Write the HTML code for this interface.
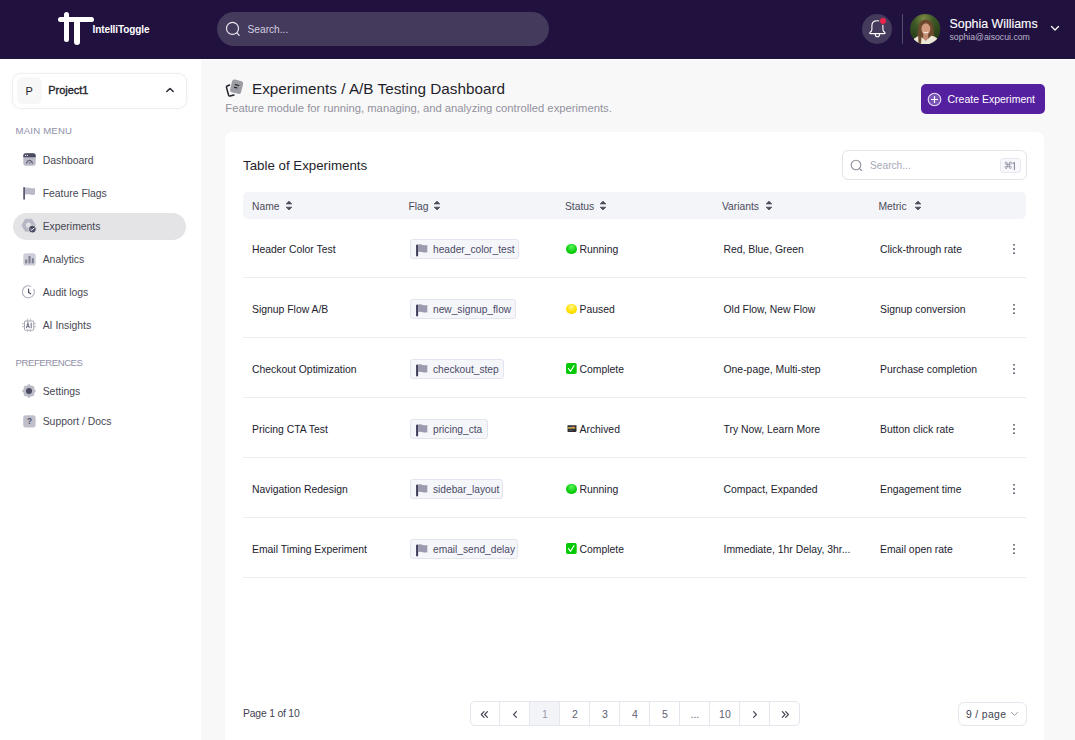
<!DOCTYPE html>
<html><head><meta charset="utf-8">
<style>
*{margin:0;padding:0;box-sizing:border-box}
html,body{width:1075px;height:740px;overflow:hidden;background:#f8f8f8;font-family:"Liberation Sans",sans-serif;color:#1f1f2b}
.abs{position:absolute}
.t{position:absolute;white-space:nowrap;line-height:1}
.nav{font-size:10.4px;color:#474753;left:42.7px}
.sec{font-size:9.6px;color:#9090a8;left:15.5px}
.th{font-size:10.3px;color:#4b4b5a}
.cell{font-size:10.4px;color:#22222e}
.chip{position:absolute;left:410px;height:20px;background:#f5f6fa;border:1px solid #e4e4ee;border-radius:3px}
.chip span{position:absolute;left:22px;top:5.1px;font-size:10.2px;color:#4a4a66;white-space:nowrap;line-height:1}
.pg{position:absolute;top:0;width:30px;height:23px;border-left:1px solid #e5e6ee;font-size:10.5px;color:#626272;text-align:center;line-height:25.3px}
</style></head>
<body>
<div class="abs" style="left:0;top:59px;width:1075px;height:1px;background:#fff"></div>
<div class="abs" style="left:0;top:0;width:1075px;height:59px;background:#21113f"></div>
<div class="abs" style="left:58px;top:17px;width:36px;height:5.4px;background:#fff;border-radius:3px"></div>
<div class="abs" style="left:63.8px;top:11.6px;width:5.4px;height:30px;background:#fff;border-radius:3px"></div>
<div class="abs" style="left:73.8px;top:17px;width:6px;height:28.4px;background:#fff;border-radius:3px"></div>
<div class="t" style="left:92.5px;top:24.5px;font-size:10px;font-weight:bold;color:#fff;letter-spacing:-0.1px">IntelliToggle</div>
<div class="abs" style="left:216.5px;top:12px;width:332px;height:33.5px;background:#433a5c;border-radius:17px"></div>
<svg class="abs" style="left:225px;top:21px" width="18" height="17" viewBox="0 0 18 17"><circle cx="7.5" cy="7.4" r="6" fill="none" stroke="#e8e6ee" stroke-width="1.2"/><path d="M12 12 L14.2 14.4" stroke="#e8e6ee" stroke-width="1.2" stroke-linecap="round"/></svg>
<div class="t" style="left:247.5px;top:24.5px;font-size:10.2px;color:#d4cee0">Search...</div>
<div class="abs" style="left:862px;top:13.6px;width:30.4px;height:30.4px;background:#433a5c;border-radius:50%"></div>
<svg class="abs" style="left:868px;top:19px" width="19" height="19" viewBox="0 0 19 19"><path d="M9.4 1.7 C6 1.7 3.9 3.4 3.9 6.6 L3.9 10.6 Q3.9 12.4 1.9 13.5 Q1.3 14.6 2.5 14.6 L16.3 14.6 Q17.5 14.6 16.9 13.5 Q14.9 12.4 14.9 10.6 L14.9 6.6 C14.9 3.4 12.8 1.7 9.4 1.7 Z" fill="none" stroke="#fff" stroke-width="1.1" stroke-linejoin="round"/><path d="M7.2 14.9 Q7.2 17.8 9.4 17.8 Q11.6 17.8 11.6 14.9" fill="none" stroke="#fff" stroke-width="1.1"/></svg>
<div class="abs" style="left:878.9px;top:16.8px;width:7.8px;height:7.8px;background:#f0244a;border:1px solid #433a5c;border-radius:50%"></div>
<div class="abs" style="left:901.5px;top:14px;width:1px;height:30px;background:#544a6c"></div>
<svg class="abs" style="left:910px;top:13.5px" width="30.5" height="30.5" viewBox="0 0 30 30"><defs><clipPath id="avc"><circle cx="15" cy="15" r="15"/></clipPath><radialGradient id="avbg" cx="0.45" cy="0.15" r="0.9"><stop offset="0" stop-color="#7d8a45"/><stop offset="0.35" stop-color="#3f5a26"/><stop offset="1" stop-color="#1d3014"/></radialGradient></defs><g clip-path="url(#avc)"><rect width="30" height="30" fill="url(#avbg)"/><path d="M6.5 28 Q7 20 8.2 13 Q9.5 5.5 15.5 5.3 Q21.5 5.5 22.8 12 Q24 19 23.5 26 Z" fill="#6b4a2e"/><path d="M13 19 L12.8 26 Q15.5 27.5 18 26 L17.8 19 Z" fill="#c08a70"/><ellipse cx="15.6" cy="14.8" rx="4.4" ry="5.6" fill="#d39c80"/><path d="M13.3 17.6 Q15.6 19.2 18 17.6" stroke="#f6eeea" stroke-width="1" fill="none"/><path d="M1 31 Q2 23 10 21.5 L15.5 26.5 L21 21.5 Q28.5 22.5 30 31 Z" fill="#ede7d8"/><path d="M8.2 20 Q8 25 8.5 30 L10.8 30 Q11 25 11.6 21.5 Z" fill="#6b4a2e"/></g></svg>
<div class="t" style="left:949.5px;top:18px;font-size:12.4px;color:#fff;-webkit-text-stroke:0.12px #fff">Sophia Williams</div>
<div class="t" style="left:949.5px;top:33px;font-size:8.7px;color:#bcb4cc">sophia@aisocui.com</div>
<svg class="abs" style="left:1050px;top:25px" width="10" height="7" viewBox="0 0 10 7"><path d="M1.5 1.5 L5 5 L8.5 1.5" fill="none" stroke="#fff" stroke-width="1.3" stroke-linecap="round" stroke-linejoin="round"/></svg>
<div class="abs" style="left:0;top:59px;width:201px;height:681px;background:#fff"></div>
<div class="abs" style="left:10px;top:71.5px;width:178.5px;height:38px;border-radius:10px;background:#fcfcfd"></div>
<div class="abs" style="left:12px;top:73px;width:175px;height:35.5px;border:1px solid #efeff2;border-radius:9px;background:#fff"></div>
<div class="abs" style="left:16.5px;top:77px;width:25.5px;height:27px;background:#f7f7f8;border-radius:6px"></div>
<div class="t" style="left:25.5px;top:86px;font-size:11px;color:#22222c">P</div>
<div class="t" style="left:48.3px;top:85.2px;font-size:10.9px;color:#22222c;-webkit-text-stroke:0.35px #22222c">Project1</div>
<svg class="abs" style="left:165px;top:86px" width="10" height="8" viewBox="0 0 10 8"><path d="M1.8 5.6 L5 2.4 L8.2 5.6" fill="none" stroke="#22222c" stroke-width="1.4" stroke-linecap="round" stroke-linejoin="round"/></svg>
<div class="t sec" style="top:126px;letter-spacing:0.2px">MAIN MENU</div>
<div class="abs" style="left:12.5px;top:212.5px;width:173.5px;height:27px;background:#e4e4e6;border-radius:14px"></div>
<div class="t nav" style="top:156px">Dashboard</div>
<div class="t nav" style="top:189px">Feature Flags</div>
<div class="t nav" style="top:222px">Experiments</div>
<div class="t nav" style="top:255px">Analytics</div>
<div class="t nav" style="top:288px">Audit logs</div>
<div class="t nav" style="top:321px">AI Insights</div>
<div class="t nav" style="top:387px">Settings</div>
<div class="t nav" style="top:417px">Support / Docs</div>
<div class="t sec" style="top:357.8px;letter-spacing:-0.45px">PREFERENCES</div>
<svg class="abs" style="left:22.5px;top:153px" width="13" height="13" viewBox="0 0 13 13"><rect x="0.3" y="0.3" width="12.4" height="12.4" rx="2.5" fill="#babac8"/><path d="M0.3 2.8 Q0.3 0.3 2.8 0.3 H10.2 Q12.7 0.3 12.7 2.8 V4.3 H0.3 Z" fill="#4a4a62"/><circle cx="2.6" cy="2.3" r="0.6" fill="#fff"/><circle cx="4.4" cy="2.3" r="0.6" fill="#fff"/><path d="M3.6 10.6 Q3.6 7.4 6.5 7.4 Q9.4 7.4 9.4 10.6" fill="none" stroke="#4a4a62" stroke-width="1"/><path d="M6.5 10.4 L7.4 8.8" stroke="#4a4a62" stroke-width="0.9"/></svg>
<svg class="abs" style="left:22.5px;top:187px" width="13" height="13" viewBox="0 0 13 13"><path d="M1.1 0.8 V12" stroke="#4a4a62" stroke-width="1.6" stroke-linecap="round"/><path d="M2 0.8 Q4.5 0 7 0.9 Q9.5 1.7 12 0.9 V7.6 Q9.5 8.4 7 7.6 Q4.5 6.8 2 7.6 Z" fill="#babac8"/></svg>
<svg class="abs" style="left:21px;top:218px" width="17" height="17" viewBox="0 0 17 17"><path d="M4.3 1.3 H10.7 L14.3 7.2 L10.7 13.2 H4.3 L1.0 7.2 Z" fill="#b6b6c4" stroke="#b6b6c4" stroke-width="0.9" stroke-linejoin="round"/><circle cx="7.5" cy="7.2" r="2.6" fill="#e2e2e6"/><circle cx="11.4" cy="11.1" r="3.9" fill="#4a4a62" stroke="#e6e6e8" stroke-width="0.9"/><path d="M9.7 11.3 L10.9 12.4 L13.1 10" fill="none" stroke="#fff" stroke-width="1" stroke-linecap="round" stroke-linejoin="round"/></svg>
<svg class="abs" style="left:22.5px;top:252.5px" width="13" height="13" viewBox="0 0 13 13"><rect x="0.3" y="0.3" width="12.4" height="12.2" rx="2.6" fill="#cdcdd8"/><rect x="2.2" y="6.6" width="2" height="3.7" fill="#7e7e92"/><rect x="5.5" y="3" width="2" height="7.3" fill="#7e7e92"/><rect x="8.8" y="5.2" width="2" height="5.1" fill="#7e7e92"/></svg>
<svg class="abs" style="left:22px;top:284.5px" width="14" height="14" viewBox="0 0 14 14"><path d="M11.8 4.2 A6 6 0 1 1 8.8 1.3" fill="none" stroke="#b0b0c0" stroke-width="1.1" stroke-linecap="round"/><path d="M6.6 4.2 V7.4 L8.6 8.8" fill="none" stroke="#4a4a62" stroke-width="1.2" stroke-linecap="round" stroke-linejoin="round"/></svg>
<svg class="abs" style="left:22px;top:317.5px" width="14" height="14" viewBox="0 0 14 14"><rect x="2.5" y="3" width="9.2" height="9.2" rx="0.8" fill="none" stroke="#a4a4b4" stroke-width="1"/><path d="M5.4 0.7 V3 M8.4 0.7 V3 M5.4 12.2 V14 M8.4 12.2 V14 M0 5.8 H2.5 M0 8.7 H2.5 M11.7 5.8 H14 M11.7 8.7 H14" stroke="#b0b0be" stroke-width="0.9"/><path d="M4.4 10.2 L5.9 4.8 L7.4 10.2 M4.9 8.5 H6.9 M9.2 4.8 V10.2" fill="none" stroke="#7a7a8e" stroke-width="1.1"/></svg>
<svg class="abs" style="left:22px;top:384px" width="14" height="14" viewBox="0 0 14 14"><path d="M7 0.3 L9.1 2 L11.7 2.3 L12 4.9 L13.7 7 L12 9.1 L11.7 11.7 L9.1 12 L7 13.7 L4.9 12 L2.3 11.7 L2 9.1 L0.3 7 L2 4.9 L2.3 2.3 L4.9 2 Z" fill="#bcbcc8" stroke="#bcbcc8" stroke-width="0.6" stroke-linejoin="round"/><circle cx="7" cy="7" r="3" fill="#4a4a62"/></svg>
<svg class="abs" style="left:22.8px;top:414.5px" width="13" height="13" viewBox="0 0 13 13"><rect x="0.2" y="0.2" width="12.4" height="12.2" rx="2.6" fill="#c0c0cc"/><text x="6.4" y="9.4" font-family="Liberation Sans" font-size="8.2" font-weight="bold" text-anchor="middle" fill="#4a4a62">?</text></svg>
<svg class="abs" style="left:225px;top:78.6px" width="19" height="19" viewBox="0 0 19 19">
  <rect x="6" y="1.3" width="11.3" height="13" rx="2.3" transform="rotate(14 12 7.5)" fill="#9c9ca4"/>
  <path d="M4.5 6 L2.2 7 Q1.2 7.5 1.5 8.6 L3.6 16.2 Q4 17.3 5.1 17 L9 16" fill="none" stroke="#22222c" stroke-width="1.5" stroke-linecap="round" stroke-linejoin="round"/>
  <path d="M10.3 5.6 L13.8 6.5 M9.5 8.3 L11.9 8.9" stroke="#26262e" stroke-width="1.2" stroke-linecap="round"/>
</svg>
<div class="t" style="left:252px;top:80.7px;font-size:15.3px;color:#1f1f2b">Experiments / A/B Testing Dashboard</div>
<div class="t" style="left:225.3px;top:102.6px;font-size:11.25px;color:#92929e">Feature module for running, managing, and analyzing controlled experiments.</div>
<div class="abs" style="left:921px;top:84px;width:123.5px;height:30px;background:#5520a0;border-radius:5px"></div>
<svg class="abs" style="left:926.5px;top:91.5px" width="15" height="15" viewBox="0 0 15 15"><circle cx="7.5" cy="7.5" r="6.3" fill="#7a55b8" stroke="#e6ddf3" stroke-width="1.1"/><path d="M7.5 4.5 V10.5 M4.5 7.5 H10.5" stroke="#fff" stroke-width="1.2" stroke-linecap="round"/></svg>
<div class="t" style="left:947.5px;top:93.6px;font-size:10.5px;color:#fff">Create Experiment</div>
<div class="abs" style="left:225px;top:132px;width:819px;height:640px;background:#fff;border-radius:7px"></div>
<div class="t" style="left:243px;top:158.6px;font-size:13.3px;color:#1f1f2b">Table of Experiments</div>
<div class="abs" style="left:842px;top:150px;width:184.5px;height:30px;border:1px solid #e3e3ea;border-radius:6px;background:#fff"></div>
<svg class="abs" style="left:850px;top:159px" width="14" height="14" viewBox="0 0 14 14"><circle cx="6" cy="6" r="4.8" fill="none" stroke="#8c8c9c" stroke-width="1.1"/><path d="M9.6 9.6 L11.5 11.5" stroke="#8c8c9c" stroke-width="1.1" stroke-linecap="round"/></svg>
<div class="t" style="left:870px;top:161.2px;font-size:10.2px;color:#a8a8b6">Search...</div>
<div class="abs" style="left:1000px;top:158px;width:20.5px;height:14.5px;border:1px solid #e8e8ee;border-radius:3px;background:#f7f8fb"></div>
<svg class="abs" style="left:1004.2px;top:161.2px" width="8.5" height="8.5" viewBox="0 0 24 24"><path d="M15 6v12a3 3 0 1 0 3-3H6a3 3 0 1 0 3 3V6a3 3 0 1 0-3 3h12a3 3 0 1 0-3-3" fill="none" stroke="#8a8a9e" stroke-width="2.3"/></svg><svg class="abs" style="left:1012px;top:161.5px" width="4" height="8.5" viewBox="0 0 4 8.5"><path d="M0.6 1.6 L2.4 0.6 V8" fill="none" stroke="#8a8a9e" stroke-width="1.1" stroke-linejoin="round"/></svg>
<div class="abs" style="left:243px;top:192px;width:783px;height:27px;background:#f4f5f9;border-radius:5px"></div>
<div class="t th" style="left:252px;top:201.5px">Name</div>
<div class="t th" style="left:408.5px;top:201.5px">Flag</div>
<div class="t th" style="left:565px;top:201.5px">Status</div>
<div class="t th" style="left:722px;top:201.5px">Variants</div>
<div class="t th" style="left:878.5px;top:201.5px">Metric</div>
<svg class="abs" style="left:285px;top:200px" width="8" height="11" viewBox="0 0 8 11"><path d="M1.2 3.9 L4 1.2 L6.8 3.9 Z M1.2 7.2 L4 9.9 L6.8 7.2 Z" fill="#4b4b5a" stroke="#4b4b5a" stroke-width="0.8" stroke-linejoin="round"/></svg>
<svg class="abs" style="left:433.3px;top:200px" width="8" height="11" viewBox="0 0 8 11"><path d="M1.2 3.9 L4 1.2 L6.8 3.9 Z M1.2 7.2 L4 9.9 L6.8 7.2 Z" fill="#4b4b5a" stroke="#4b4b5a" stroke-width="0.8" stroke-linejoin="round"/></svg>
<svg class="abs" style="left:598.7px;top:200px" width="8" height="11" viewBox="0 0 8 11"><path d="M1.2 3.9 L4 1.2 L6.8 3.9 Z M1.2 7.2 L4 9.9 L6.8 7.2 Z" fill="#4b4b5a" stroke="#4b4b5a" stroke-width="0.8" stroke-linejoin="round"/></svg>
<svg class="abs" style="left:764.5px;top:200px" width="8" height="11" viewBox="0 0 8 11"><path d="M1.2 3.9 L4 1.2 L6.8 3.9 Z M1.2 7.2 L4 9.9 L6.8 7.2 Z" fill="#4b4b5a" stroke="#4b4b5a" stroke-width="0.8" stroke-linejoin="round"/></svg>
<svg class="abs" style="left:914px;top:200px" width="8" height="11" viewBox="0 0 8 11"><path d="M1.2 3.9 L4 1.2 L6.8 3.9 Z M1.2 7.2 L4 9.9 L6.8 7.2 Z" fill="#4b4b5a" stroke="#4b4b5a" stroke-width="0.8" stroke-linejoin="round"/></svg>
<div class="abs" style="left:243px;top:277px;width:783px;height:1px;background:#ececf2"></div>
<div class="t cell" style="left:252px;top:244.5px">Header Color Test</div>
<div class="chip" style="top:239.2px;width:108.5px"><svg class="abs" style="left:4px;top:2.5px" width="14" height="15" viewBox="0 0 14 15"><path d="M2.1 2.4 V12.5" stroke="#3e3a5a" stroke-width="2" stroke-linecap="round"/><path d="M3.1 1.6 Q5.5 0.9 8 1.9 Q10.2 2.6 12.3 1.9 V9.2 Q10.2 9.9 8 9.2 Q5.5 8.2 3.1 9 Z" fill="#9c9aae"/></svg><span>header_color_test</span></div>
<div class="abs" style="left:566px;top:243.6px;width:10.6px;height:10.6px;border-radius:50%;background:radial-gradient(circle at 50% 30%,#5af55a,#10d010 55%,#00b400)"></div>
<div class="t cell" style="left:579.5px;top:244.5px">Running</div>
<div class="t cell" style="left:723.5px;top:244.5px">Red, Blue, Green</div>
<div class="t cell" style="left:880px;top:244.5px">Click-through rate</div>
<svg class="abs" style="left:1012px;top:243px" width="4" height="12" viewBox="0 0 4 12"><circle cx="2" cy="1.8" r="0.9" fill="#4a4a58"/><circle cx="2" cy="6" r="0.9" fill="#4a4a58"/><circle cx="2" cy="10.2" r="0.9" fill="#4a4a58"/></svg>
<div class="abs" style="left:243px;top:337px;width:783px;height:1px;background:#ececf2"></div>
<div class="t cell" style="left:252px;top:304.5px">Signup Flow A/B</div>
<div class="chip" style="top:299.2px;width:106px"><svg class="abs" style="left:4px;top:2.5px" width="14" height="15" viewBox="0 0 14 15"><path d="M2.1 2.4 V12.5" stroke="#3e3a5a" stroke-width="2" stroke-linecap="round"/><path d="M3.1 1.6 Q5.5 0.9 8 1.9 Q10.2 2.6 12.3 1.9 V9.2 Q10.2 9.9 8 9.2 Q5.5 8.2 3.1 9 Z" fill="#9c9aae"/></svg><span>new_signup_flow</span></div>
<div class="abs" style="left:566px;top:303.6px;width:10.6px;height:10.6px;border-radius:50%;background:radial-gradient(circle at 50% 30%,#fff590,#ffe200 55%,#f5c800)"></div>
<div class="t cell" style="left:579.5px;top:304.5px">Paused</div>
<div class="t cell" style="left:723.5px;top:304.5px">Old Flow, New Flow</div>
<div class="t cell" style="left:880px;top:304.5px">Signup conversion</div>
<svg class="abs" style="left:1012px;top:303px" width="4" height="12" viewBox="0 0 4 12"><circle cx="2" cy="1.8" r="0.9" fill="#4a4a58"/><circle cx="2" cy="6" r="0.9" fill="#4a4a58"/><circle cx="2" cy="10.2" r="0.9" fill="#4a4a58"/></svg>
<div class="abs" style="left:243px;top:397px;width:783px;height:1px;background:#ececf2"></div>
<div class="t cell" style="left:252px;top:364.5px">Checkout Optimization</div>
<div class="chip" style="top:359.2px;width:93.5px"><svg class="abs" style="left:4px;top:2.5px" width="14" height="15" viewBox="0 0 14 15"><path d="M2.1 2.4 V12.5" stroke="#3e3a5a" stroke-width="2" stroke-linecap="round"/><path d="M3.1 1.6 Q5.5 0.9 8 1.9 Q10.2 2.6 12.3 1.9 V9.2 Q10.2 9.9 8 9.2 Q5.5 8.2 3.1 9 Z" fill="#9c9aae"/></svg><span>checkout_step</span></div>
<svg class="abs" style="left:566px;top:362.9px" width="11" height="11" viewBox="0 0 11 11"><rect x="0" y="0" width="10.7" height="11" rx="1.8" fill="#05c905"/><path d="M2.4 5.6 L4.6 8.3 L8 2.6" fill="none" stroke="#fff" stroke-width="1.1" stroke-linecap="round" stroke-linejoin="round"/></svg>
<div class="t cell" style="left:579.5px;top:364.5px">Complete</div>
<div class="t cell" style="left:723.5px;top:364.5px">One-page, Multi-step</div>
<div class="t cell" style="left:880px;top:364.5px">Purchase completion</div>
<svg class="abs" style="left:1012px;top:363px" width="4" height="12" viewBox="0 0 4 12"><circle cx="2" cy="1.8" r="0.9" fill="#4a4a58"/><circle cx="2" cy="6" r="0.9" fill="#4a4a58"/><circle cx="2" cy="10.2" r="0.9" fill="#4a4a58"/></svg>
<div class="abs" style="left:243px;top:457px;width:783px;height:1px;background:#ececf2"></div>
<div class="t cell" style="left:252px;top:424.5px">Pricing CTA Test</div>
<div class="chip" style="top:419.2px;width:78px"><svg class="abs" style="left:4px;top:2.5px" width="14" height="15" viewBox="0 0 14 15"><path d="M2.1 2.4 V12.5" stroke="#3e3a5a" stroke-width="2" stroke-linecap="round"/><path d="M3.1 1.6 Q5.5 0.9 8 1.9 Q10.2 2.6 12.3 1.9 V9.2 Q10.2 9.9 8 9.2 Q5.5 8.2 3.1 9 Z" fill="#9c9aae"/></svg><span>pricing_cta</span></div>
<svg class="abs" style="left:566.5px;top:424.9px" width="10" height="8" viewBox="0 0 10 8"><path d="M0.5 0.3 H9.5 V6 Q9.3 7.1 8.4 7.1 H0.6 Z" fill="#2c2c32"/><rect x="3" y="1" width="2.5" height="1" fill="#2a3a8a"/><rect x="5.5" y="1" width="1.8" height="1" fill="#c0402a"/><rect x="0.6" y="2.2" width="7.6" height="1.4" fill="#e8c050"/><rect x="2" y="5.2" width="4.5" height="0.6" fill="#6a6a70"/></svg>
<div class="t cell" style="left:579.5px;top:424.5px">Archived</div>
<div class="t cell" style="left:723.5px;top:424.5px">Try Now, Learn More</div>
<div class="t cell" style="left:880px;top:424.5px">Button click rate</div>
<svg class="abs" style="left:1012px;top:423px" width="4" height="12" viewBox="0 0 4 12"><circle cx="2" cy="1.8" r="0.9" fill="#4a4a58"/><circle cx="2" cy="6" r="0.9" fill="#4a4a58"/><circle cx="2" cy="10.2" r="0.9" fill="#4a4a58"/></svg>
<div class="abs" style="left:243px;top:517px;width:783px;height:1px;background:#ececf2"></div>
<div class="t cell" style="left:252px;top:484.5px">Navigation Redesign</div>
<div class="chip" style="top:479.2px;width:92.5px"><svg class="abs" style="left:4px;top:2.5px" width="14" height="15" viewBox="0 0 14 15"><path d="M2.1 2.4 V12.5" stroke="#3e3a5a" stroke-width="2" stroke-linecap="round"/><path d="M3.1 1.6 Q5.5 0.9 8 1.9 Q10.2 2.6 12.3 1.9 V9.2 Q10.2 9.9 8 9.2 Q5.5 8.2 3.1 9 Z" fill="#9c9aae"/></svg><span>sidebar_layout</span></div>
<div class="abs" style="left:566px;top:483.6px;width:10.6px;height:10.6px;border-radius:50%;background:radial-gradient(circle at 50% 30%,#5af55a,#10d010 55%,#00b400)"></div>
<div class="t cell" style="left:579.5px;top:484.5px">Running</div>
<div class="t cell" style="left:723.5px;top:484.5px">Compact, Expanded</div>
<div class="t cell" style="left:880px;top:484.5px">Engagement time</div>
<svg class="abs" style="left:1012px;top:483px" width="4" height="12" viewBox="0 0 4 12"><circle cx="2" cy="1.8" r="0.9" fill="#4a4a58"/><circle cx="2" cy="6" r="0.9" fill="#4a4a58"/><circle cx="2" cy="10.2" r="0.9" fill="#4a4a58"/></svg>
<div class="abs" style="left:243px;top:577px;width:783px;height:1px;background:#ececf2"></div>
<div class="t cell" style="left:252px;top:544.5px">Email Timing Experiment</div>
<div class="chip" style="top:539.2px;width:108px"><svg class="abs" style="left:4px;top:2.5px" width="14" height="15" viewBox="0 0 14 15"><path d="M2.1 2.4 V12.5" stroke="#3e3a5a" stroke-width="2" stroke-linecap="round"/><path d="M3.1 1.6 Q5.5 0.9 8 1.9 Q10.2 2.6 12.3 1.9 V9.2 Q10.2 9.9 8 9.2 Q5.5 8.2 3.1 9 Z" fill="#9c9aae"/></svg><span>email_send_delay</span></div>
<svg class="abs" style="left:566px;top:542.9px" width="11" height="11" viewBox="0 0 11 11"><rect x="0" y="0" width="10.7" height="11" rx="1.8" fill="#05c905"/><path d="M2.4 5.6 L4.6 8.3 L8 2.6" fill="none" stroke="#fff" stroke-width="1.1" stroke-linecap="round" stroke-linejoin="round"/></svg>
<div class="t cell" style="left:579.5px;top:544.5px">Complete</div>
<div class="t cell" style="left:723.5px;top:544.5px">Immediate, 1hr Delay, 3hr...</div>
<div class="t cell" style="left:880px;top:544.5px">Email open rate</div>
<svg class="abs" style="left:1012px;top:543px" width="4" height="12" viewBox="0 0 4 12"><circle cx="2" cy="1.8" r="0.9" fill="#4a4a58"/><circle cx="2" cy="6" r="0.9" fill="#4a4a58"/><circle cx="2" cy="10.2" r="0.9" fill="#4a4a58"/></svg>
<div class="t" style="left:243px;top:709px;font-size:10.4px;letter-spacing:-0.2px;color:#434352">Page 1 of 10</div>
<div class="abs" style="left:470px;top:701px;width:330px;height:25px;border:1px solid #e5e6ee;border-radius:5px;background:#fff;overflow:hidden">
  <div class="pg" style="left:-1px;border-left:none;"><svg style="position:absolute;left:10px;top:8.8px" width="9" height="7" viewBox="0 0 9 7"><path d="M4 0.6 L1.3 3.5 L4 6.4 M7.4 0.6 L4.7 3.5 L7.4 6.4" stroke="#4a4a5a" stroke-width="1.2" fill="none" stroke-linecap="round" stroke-linejoin="round"/></svg></div>
  <div class="pg" style="left:28.4px;"><svg style="position:absolute;left:11.5px;top:8.8px" width="6" height="7" viewBox="0 0 6 7"><path d="M4.4 0.6 L1.6 3.5 L4.4 6.4" stroke="#4a4a5a" stroke-width="1.2" fill="none" stroke-linecap="round" stroke-linejoin="round"/></svg></div>
  <div class="pg" style="left:58.4px;background:#f3f4f8;color:#9a9aab;">1</div>
  <div class="pg" style="left:88.4px;">2</div>
  <div class="pg" style="left:118.4px;">3</div>
  <div class="pg" style="left:148.4px;">4</div>
  <div class="pg" style="left:178.4px;">5</div>
  <div class="pg" style="left:208.4px;">...</div>
  <div class="pg" style="left:238.4px;">10</div>
  <div class="pg" style="left:268.4px;"><svg style="position:absolute;left:11.5px;top:8.8px" width="6" height="7" viewBox="0 0 6 7"><path d="M1.6 0.6 L4.4 3.5 L1.6 6.4" stroke="#4a4a5a" stroke-width="1.2" fill="none" stroke-linecap="round" stroke-linejoin="round"/></svg></div>
  <div class="pg" style="left:298.4px;"><svg style="position:absolute;left:10.5px;top:8.8px" width="9" height="7" viewBox="0 0 9 7"><path d="M1.3 0.6 L4 3.5 L1.3 6.4 M4.7 0.6 L7.4 3.5 L4.7 6.4" stroke="#4a4a5a" stroke-width="1.2" fill="none" stroke-linecap="round" stroke-linejoin="round"/></svg></div>
</div>
<div class="abs" style="left:958px;top:702px;width:68.5px;height:23.5px;border:1px solid #e5e6ee;border-radius:6px;background:#fff"></div>
<div class="t" style="left:966px;top:709.6px;font-size:10.4px;letter-spacing:0.35px;color:#434352">9 / page</div>
<svg class="abs" style="left:1010px;top:711px" width="9" height="6" viewBox="0 0 9 6"><path d="M1.5 1.5 L4.5 4.3 L7.5 1.5" fill="none" stroke="#9a9aab" stroke-width="1" stroke-linecap="round"/></svg>
</body></html>
